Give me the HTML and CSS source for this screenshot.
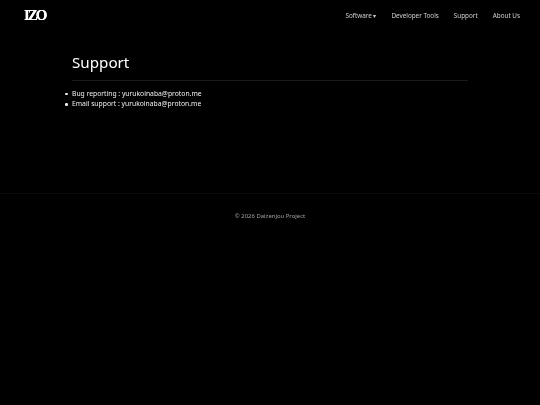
FILE: index.html
```html
<!DOCTYPE html>
<html lang="en">
<head>
<meta charset="utf-8">
<title>Support</title>
<link rel="stylesheet" href="styles.css">
</head>
<body>
<header class="site-header">
  <a class="logo" href="#">IZO</a>
  <nav class="nav">
    <a href="#">Software ▾</a>
    <a href="#">Developer Tools</a>
    <a href="#">Support</a>
    <a href="#">About Us</a>
  </nav>
</header>
<main class="content">
  <h1>Support</h1>
  <ul>
    <li>Bug reporting : yurukoinaba@proton.me</li>
    <li>Email support : yurukoinaba@proton.me</li>
  </ul>
</main>
<footer class="site-footer">© 2026 Daizenjou Project</footer>
</body>
</html>
```
FILE: styles.css
```css
* { box-sizing: border-box; }
html { margin: 0; background: #000; }
body { margin: 0; min-height: 405px; font-family: "Noto Sans", sans-serif; color: #f0f0f0; font-size: 6.77px; will-change: opacity; filter: blur(0.25px); }
a { color: inherit; text-decoration: none; }
.site-header { display: flex; justify-content: space-between; align-items: center; height: 30px; padding: 0 20px 0 24px; }
.logo { font-family: "Liberation Serif", serif; font-weight: 700; font-size: 15px; color: #fff; letter-spacing: -2px; text-shadow: 0 0 0.4px #fff; }
.nav { display: flex; gap: 15px; color: #d0d0d0; font-size: 6.34px; }
.content { width: 396px; margin: 0 auto; padding-top: 21px; height: 163px; }
h1 { margin: 0; font-weight: 400; font-size: 15.2px; line-height: 22px; color: #fff; padding-bottom: 7px; border-bottom: 1px solid #1a1a1a; }
ul { margin: 8px 0 0; padding: 0; list-style: none; }
li { display: flex; align-items: center; gap: 4.5px; margin-left: -7px; line-height: 10.2px; }
li::before { content: ""; width: 2.5px; height: 2.5px; border-radius: 50%; background: #eee; }
.site-footer { border-top: 1px solid #0c0c0c; text-align: center; padding-top: 17px; color: #a0a0a0; font-size: 5.95px; line-height: 10px; }
```
